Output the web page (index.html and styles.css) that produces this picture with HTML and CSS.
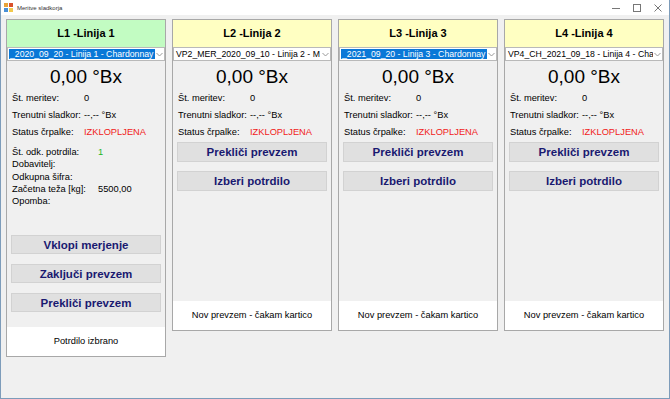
FILE: index.html
```html
<!DOCTYPE html>
<html lang="sl">
<head>
    <meta charset="UTF-8">
    <title>Meritve sladkorja</title>
    <link rel="stylesheet" href="styles.css">
</head>
<body>
    <div class="window">
        <div class="titlebar">
            <svg class="app-icon" width="9" height="9" viewBox="0 0 9 9">
                <rect x="0" y="0" width="4" height="4" fill="#e8a33a"/>
                <rect x="5" y="0" width="4" height="4" fill="#d9512c"/>
                <rect x="0" y="5" width="4" height="4" fill="#4a8fd6"/>
                <rect x="5" y="5" width="4" height="4" fill="#f2c94c"/>
            </svg>
            <span class="title">Meritve sladkorja</span>
            <div class="controls">
                <svg width="10" height="10" viewBox="0 0 10 10"><line x1="1" y1="5.5" x2="9" y2="5.5" stroke="#777" stroke-width="1"/></svg>
                <svg width="10" height="10" viewBox="0 0 10 10"><rect x="1.5" y="1.5" width="7" height="7" fill="none" stroke="#777" stroke-width="1"/></svg>
                <svg width="10" height="10" viewBox="0 0 10 10"><path d="M1.5 1.5 L8.5 8.5 M8.5 1.5 L1.5 8.5" stroke="#777" stroke-width="1"/></svg>
            </div>
        </div>

        <div class="lines">
            <!-- Linija 1 (aktivna) -->
            <section class="line line-tall">
                <div class="line-head head-green">L1 -Linija 1</div>
                <div class="combo">
                    <span class="combo-text selected">_2020_09_20 - Linija 1 - Chardonnay</span>
                    <svg class="combo-arrow" width="7" height="5" viewBox="0 0 7 5"><path d="M0.5 1 L3.5 4 L6.5 1" fill="none" stroke="#999" stroke-width="1"/></svg>
                </div>
                <div class="brix">0,00 °Bx</div>
                <div class="row"><span class="lbl">Št. meritev:</span><span>0</span></div>
                <div class="row"><span class="lbl">Trenutni sladkor:</span><span>--,-- °Bx</span></div>
                <div class="row"><span class="lbl">Status črpalke:</span><span class="off">IZKLOPLJENA</span></div>
                <div class="details">
                    <div class="drow"><span class="dlbl">Št. odk. potrdila:</span><span class="ok">1</span></div>
                    <div class="drow"><span class="dlbl">Dobavitelj:</span><span></span></div>
                    <div class="drow"><span class="dlbl">Odkupna šifra:</span><span></span></div>
                    <div class="drow"><span class="dlbl">Začetna teža [kg]:</span><span>5500,00</span></div>
                    <div class="drow"><span class="dlbl">Opomba:</span><span></span></div>
                </div>
                <div class="buttons buttons-l1">
                    <button class="btn">Vklopi merjenje</button>
                    <button class="btn">Zaključi prevzem</button>
                    <button class="btn">Prekliči prevzem</button>
                </div>
                <div class="status">Potrdilo izbrano</div>
            </section>

            <section class="line">
                <div class="line-head head-yellow">L2 -Linija 2</div>
                <div class="combo">
                    <span class="combo-text">VP2_MER_2020_09_10 - Linija 2 - M</span>
                    <svg class="combo-arrow" width="7" height="5" viewBox="0 0 7 5"><path d="M0.5 1 L3.5 4 L6.5 1" fill="none" stroke="#999" stroke-width="1"/></svg>
                </div>
                <div class="brix">0,00 °Bx</div>
                <div class="row"><span class="lbl">Št. meritev:</span><span>0</span></div>
                <div class="row"><span class="lbl">Trenutni sladkor:</span><span>--,-- °Bx</span></div>
                <div class="row"><span class="lbl">Status črpalke:</span><span class="off">IZKLOPLJENA</span></div>
                <div class="buttons">
                    <button class="btn">Prekliči prevzem</button>
                    <button class="btn">Izberi potrdilo</button>
                </div>
                <div class="status">Nov prevzem - čakam kartico</div>
            </section>

            <section class="line">
                <div class="line-head head-yellow">L3 -Linija 3</div>
                <div class="combo">
                    <span class="combo-text selected">_2021_09_20 - Linija 3 - Chardonnay</span>
                    <svg class="combo-arrow" width="7" height="5" viewBox="0 0 7 5"><path d="M0.5 1 L3.5 4 L6.5 1" fill="none" stroke="#999" stroke-width="1"/></svg>
                </div>
                <div class="brix">0,00 °Bx</div>
                <div class="row"><span class="lbl">Št. meritev:</span><span>0</span></div>
                <div class="row"><span class="lbl">Trenutni sladkor:</span><span>--,-- °Bx</span></div>
                <div class="row"><span class="lbl">Status črpalke:</span><span class="off">IZKLOPLJENA</span></div>
                <div class="buttons">
                    <button class="btn">Prekliči prevzem</button>
                    <button class="btn">Izberi potrdilo</button>
                </div>
                <div class="status">Nov prevzem - čakam kartico</div>
            </section>

            <section class="line">
                <div class="line-head head-yellow">L4 -Linija 4</div>
                <div class="combo">
                    <span class="combo-text">VP4_CH_2021_09_18 - Linija 4 - Cha</span>
                    <svg class="combo-arrow" width="7" height="5" viewBox="0 0 7 5"><path d="M0.5 1 L3.5 4 L6.5 1" fill="none" stroke="#999" stroke-width="1"/></svg>
                </div>
                <div class="brix">0,00 °Bx</div>
                <div class="row"><span class="lbl">Št. meritev:</span><span>0</span></div>
                <div class="row"><span class="lbl">Trenutni sladkor:</span><span>--,-- °Bx</span></div>
                <div class="row"><span class="lbl">Status črpalke:</span><span class="off">IZKLOPLJENA</span></div>
                <div class="buttons">
                    <button class="btn">Prekliči prevzem</button>
                    <button class="btn">Izberi potrdilo</button>
                </div>
                <div class="status">Nov prevzem - čakam kartico</div>
            </section>
        </div>
    </div>
</body>
</html>
```

FILE: styles.css
```css
body {
    margin: 0;
    font-family: "Liberation Sans", Arial, sans-serif;
    background-color: #f0f0f0;
}

.window {
    width: 670px;
    height: 399px;
    box-sizing: border-box;
    border: 1px solid #7d9cba;
    border-top: none;
    background-color: #f0f0f0;
    overflow: hidden;
}

.titlebar {
    height: 15px;
    background: #ffffff;
    display: flex;
    align-items: center;
    padding-left: 3px;
}

.app-icon {
    margin-right: 4px;
}

.title {
    font-size: 6px;
    color: #333333;
}

.controls {
    margin-left: auto;
    display: flex;
    gap: 11px;
    padding-right: 6px;
    padding-top: 1px;
}

.lines {
    display: flex;
    gap: 6px;
    padding: 4px 5px;
    align-items: flex-start;
}

.line {
    width: 160px;
    height: 312px;
    box-sizing: border-box;
    border: 1px solid #a8a8a8;
    background: #f0f0f0;
    display: flex;
    flex-direction: column;
    font-size: 9.3px;
    color: #000000;
}

.line-tall {
    height: 338px;
}

.line-head {
    height: 27px;
    line-height: 27px;
    text-align: center;
    font-weight: bold;
    font-size: 11px;
}

.head-green {
    background: #c2fcc2;
}

.head-yellow {
    background: #ffffc2;
}

.combo {
    height: 14px;
    box-sizing: border-box;
    border: 1px solid #b9b9b9;
    background: #ffffff;
    display: flex;
    align-items: center;
    padding: 1px 0 1px 1px;
}

.combo-text {
    flex: 1;
    min-width: 0;
    white-space: nowrap;
    overflow: hidden;
    line-height: 10px;
    padding-left: 1px;
    font-size: 8.7px;
}

.combo-text.selected {
    background: #0a78d7;
    color: #ffffff;
}

.combo-arrow {
    width: 7px;
    margin: 0 1px 0 1px;
}

.brix {
    height: 29px;
    line-height: 31px;
    text-align: center;
    font-size: 19px;
}

.row {
    display: flex;
    height: 17px;
    line-height: 17px;
    padding-left: 5px;
}

.lbl {
    width: 72px;
}

.off {
    color: #f01a1a;
}

.ok {
    color: #22b522;
}

.details {
    margin-top: 5px;
    padding-left: 5px;
}

.drow {
    display: flex;
    height: 12.3px;
    line-height: 12.3px;
}

.dlbl {
    width: 86px;
}

.buttons {
    display: flex;
    flex-direction: column;
    gap: 9px;
    padding: 0 4px;
    margin-top: 1px;
}

.buttons-l1 {
    margin-top: 28px;
    gap: 10px;
}

.btn {
    height: 20px;
    padding: 0;
    background: #e0e0e0;
    border: 1px solid #d2d2d2;
    font-family: "Liberation Sans", Arial, sans-serif;
    font-weight: bold;
    font-size: 11.5px;
    color: #191970;
}

.buttons-l1 .btn {
    height: 19px;
}

.status {
    margin-top: auto;
    height: 29px;
    line-height: 29px;
    background: #ffffff;
    text-align: center;
}
```
